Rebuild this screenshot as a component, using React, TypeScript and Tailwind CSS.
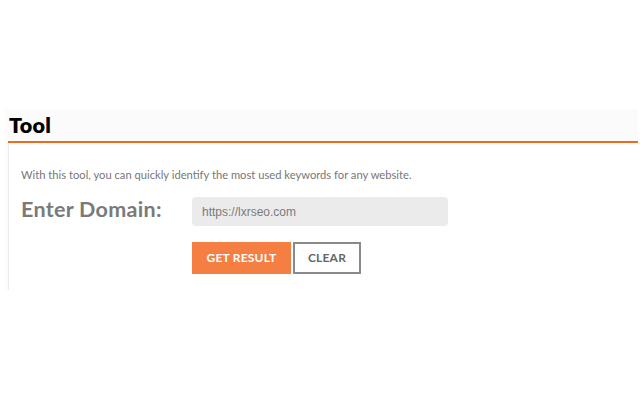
import React from "react";

export default function App() {
  return (
    <div className="w-[640px] h-[400px] bg-white pt-[109px] font-['Lato',sans-serif]">
      <div className="ml-[5px] w-[633px] bg-[#fbfbfb] pl-[3px]">
        <div className="h-[34px] border-b-2 border-[#f26b1d] pl-[1px]">
          <h1 className="text-[21.5px] leading-[32px] font-extrabold text-black tracking-[0.2px]">Tool</h1>
        </div>
        <div className="h-[147px] bg-white border-l border-[#ececec] pl-[12px] pt-[24px]">
          <p className="text-[11.2px] leading-[16px] text-[#777]">
            With this tool, you can quickly identify the most used keywords for any website.
          </p>
          <div className="mt-[14px] flex items-start">
            <label className="w-[171px] text-[21.5px] leading-[24px] font-bold text-[#7a7a7a] tracking-[0.3px]">
              Enter Domain:
            </label>
            <div className="w-[256px] h-[29px] rounded-[4px] bg-[#ebebeb] flex items-center pl-[10px] text-[12px] text-[#7b7b7b] font-['Liberation_Sans',sans-serif]">
              https://lxrseo.com
            </div>
          </div>
          <div className="mt-[16px] ml-[171px] flex gap-[2px]">
            <button className="w-[99px] h-[32px] bg-[#f57f43] text-white text-[12px] font-bold tracking-[0.2px]">
              GET RESULT
            </button>
            <button className="w-[68px] h-[32px] border-2 border-[#8a8a8a] bg-white text-[#666] text-[12px] font-bold tracking-[0.2px]">
              CLEAR
            </button>
          </div>
        </div>
      </div>
    </div>
  );
}
